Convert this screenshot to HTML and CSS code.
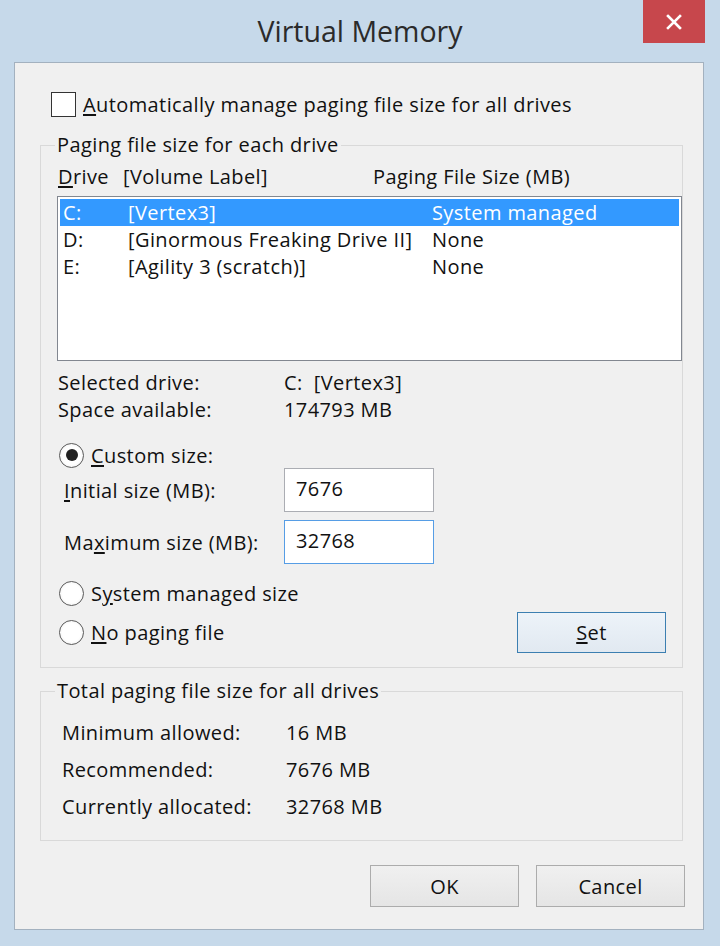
FILE: index.html
```html
<!DOCTYPE html>
<html>
<head>
    <title>Virtual Memory</title>
    <meta charset="UTF-8"/>
    <link rel="stylesheet" href="styles.css">
</head>
<body>
<div class="window">
    <div class="titlebar">
        <span class="title">Virtual Memory</span>
        <button class="close" title="Close">
            <svg width="16" height="16" viewBox="0 0 16 16">
                <path d="M2 2 L14 14 M14 2 L2 14" stroke="#fff" stroke-width="2.6" stroke-linecap="square"/>
            </svg>
        </button>
    </div>
    <div class="client">
        <label class="check-row">
            <span class="checkbox"></span>
            <span><u>A</u>utomatically manage paging file size for all drives</span>
        </label>

        <fieldset class="group drives">
            <legend>Paging file size for each drive</legend>
            <div class="list-head">
                <span><u>D</u>rive</span>
                <span>[Volume Label]</span>
                <span>Paging File Size (MB)</span>
            </div>
            <div class="listbox">
                <div class="list-row selected"><span>C:</span><span>[Vertex3]</span><span>System managed</span></div>
                <div class="list-row"><span>D:</span><span>[Ginormous Freaking Drive II]</span><span>None</span></div>
                <div class="list-row"><span>E:</span><span>[Agility 3 (scratch)]</span><span>None</span></div>
            </div>

            <div class="info">
                <div class="info-row"><span>Selected drive:</span><span>C:&nbsp; [Vertex3]</span></div>
                <div class="info-row"><span>Space available:</span><span>174793 MB</span></div>
            </div>

            <label class="radio-row custom"><span class="radio checked"></span><span><u>C</u>ustom size:</span></label>
            <div class="field-row initial">
                <span class="field-label"><u>I</u>nitial size (MB):</span>
                <span class="edit">7676</span>
            </div>
            <div class="field-row maximum">
                <span class="field-label">Ma<u>x</u>imum size (MB):</span>
                <span class="edit focused">32768</span>
            </div>
            <label class="radio-row system"><span class="radio"></span><span>S<u>y</u>stem managed size</span></label>
            <div class="last-row">
                <label class="radio-row"><span class="radio"></span><span><u>N</u>o paging file</span></label>
                <button class="btn default"><u>S</u>et</button>
            </div>
        </fieldset>

        <fieldset class="group totals">
            <legend>Total paging file size for all drives</legend>
            <div class="total-row"><span>Minimum allowed:</span><span>16 MB</span></div>
            <div class="total-row"><span>Recommended:</span><span>7676 MB</span></div>
            <div class="total-row"><span>Currently allocated:</span><span>32768 MB</span></div>
        </fieldset>

        <div class="dialog-buttons">
            <button class="btn">OK</button>
            <button class="btn">Cancel</button>
        </div>
    </div>
</div>
</body>
</html>
```

FILE: styles.css
```css
* {
    box-sizing: border-box;
}

html, body {
    margin: 0;
    background: #c6d9ea;
    color: #111;
    font-family: "Open Sans", "Noto Sans", sans-serif;
    font-size: 20px;
    letter-spacing: 0.4px;
}

u {
    text-decoration: underline;
    text-underline-offset: 2px;
}

.window {
    width: 720px;
    height: 946px;
}

/* title bar */
.titlebar {
    height: 62px;
    display: grid;
    grid-template-columns: 1fr auto 1fr;
    align-items: start;
}

.title {
    grid-column: 2;
    font-size: 28.5px;
    letter-spacing: 0;
    color: #2b2b2b;
    line-height: 36px;
    margin-top: 13px;
}

.close {
    grid-column: 3;
    justify-self: end;
    width: 62px;
    height: 43px;
    margin-right: 15px;
    border: 0;
    padding: 0;
    background: #c7474c;
    display: flex;
    align-items: center;
    justify-content: center;
}

/* client area */
.client {
    margin: 0 16px 0 14px;
    border: 1px solid #a3b1bf;
    background: #f0f0f0;
    padding: 28px 20px 22px 25px;
}

.check-row {
    display: flex;
    align-items: center;
    gap: 7px;
    height: 26px;
    margin-left: 11px;
}

.checkbox {
    width: 25px;
    height: 25px;
    border: 1px solid #333;
    background: #fff;
}

/* group boxes */
.group {
    margin: 15px 0 0;
    padding: 6px 16px 14px;
    border: 1px solid #d9d9d9;
    min-width: 0;
}

.group legend {
    padding: 0 2px;
    margin-left: -2px;
    line-height: 26px;
}

.list-head {
    display: grid;
    grid-template-columns: 65px 250px auto;
    height: 26px;
    line-height: 26px;
    padding-left: 1px;
}

.listbox {
    margin: 6px -16px 0 0;
    height: 165px;
    border: 1px solid #828790;
    background: #fff;
    padding: 2px;
}

.list-row {
    display: grid;
    grid-template-columns: 65px 304px auto;
    height: 27px;
    line-height: 27px;
    padding-left: 3px;
    white-space: nowrap;
}

.list-row.selected {
    background: #3399ff;
    color: #fff;
}

.info {
    margin-top: 8px;
}

.info-row {
    display: grid;
    grid-template-columns: 226px auto;
    height: 27px;
    line-height: 27px;
    padding-left: 1px;
}

/* radio buttons */
.radio-row {
    display: flex;
    align-items: center;
    gap: 7px;
    height: 26px;
    margin-left: 2px;
}

.radio {
    width: 25px;
    height: 25px;
    border-radius: 50%;
    border: 1px solid #5a5a5a;
    background: radial-gradient(circle, #fff 55%, #e6e6e6 100%);
    display: flex;
    align-items: center;
    justify-content: center;
}

.radio.checked:after {
    content: '';
    width: 12px;
    height: 12px;
    border-radius: 50%;
    background: #222;
}

.radio-row.custom {
    margin-top: 19px;
}

.radio-row.system {
    margin-top: 16px;
}

/* edit fields */
.field-row {
    display: grid;
    grid-template-columns: 220px 150px;
    align-items: center;
    margin-left: 7px;
}

.field-row.maximum {
    margin-top: 8px;
}

.edit {
    height: 44px;
    border: 1px solid #abadb3;
    background: #fff;
    padding: 4px 11px 0;
    line-height: 32px;
}

.edit.focused {
    border-color: #569de5;
}

.last-row {
    display: flex;
    justify-content: space-between;
    align-items: center;
    margin-top: 6px;
}

/* push buttons */
.btn {
    width: 149px;
    height: 42px;
    font: inherit;
    letter-spacing: inherit;
    color: #111;
    border: 1px solid #acacac;
    background: linear-gradient(#f0f0f0, #e5e5e5);
    padding: 0;
}

.btn.default {
    height: 41px;
    border-color: #3c7fb1;
    background: linear-gradient(#edf3f9, #e1e9f1);
}

/* totals group */
.group.totals {
    margin-top: 10px;
    padding: 10px 16px 15px;
}

.total-row {
    display: grid;
    grid-template-columns: 224px auto;
    height: 37px;
    line-height: 37px;
    padding-left: 5px;
}

.dialog-buttons {
    display: flex;
    justify-content: flex-end;
    gap: 17px;
    margin: 24px -2px 0 0;
}
```
